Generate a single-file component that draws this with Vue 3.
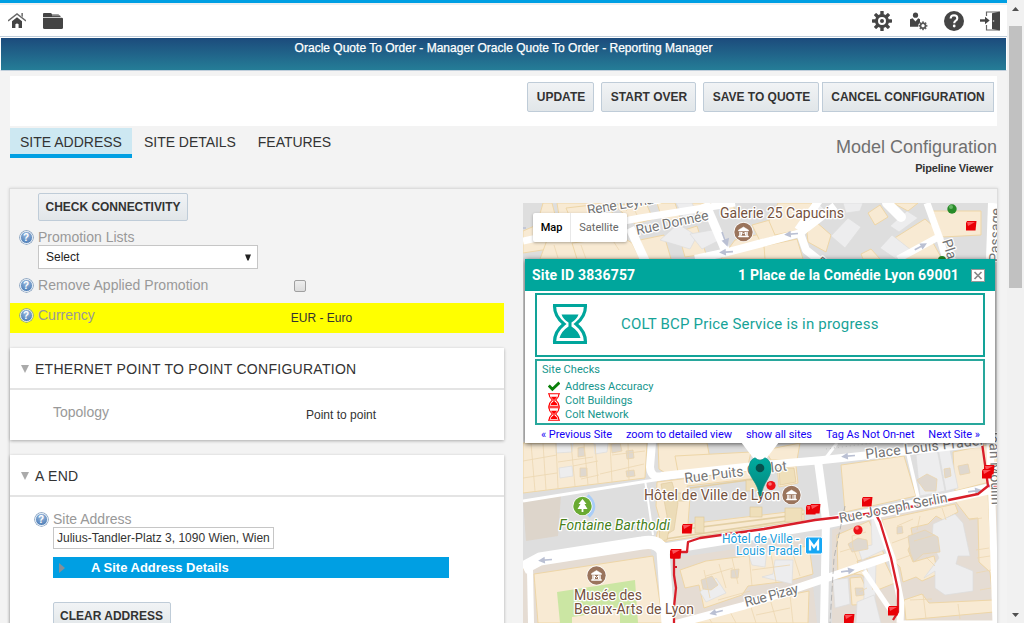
<script setup>
const actions = [
  { label: 'UPDATE', cls: 'w-update' },
  { label: 'START OVER', cls: 'w-start' },
  { label: 'SAVE TO QUOTE', cls: 'w-save' },
  { label: 'CANCEL CONFIGURATION', cls: 'w-cancel' },
]
const tabs = ['SITE ADDRESS', 'SITE DETAILS', 'FEATURES']
const links = ['« Previous Site', 'zoom to detailed view', 'show all sites', 'Tag As Not On-net', 'Next Site »']

const buildings = [
  // north blocks
  '543,203 552,203 558,226 549,236 536,228', '557,203 607,203 613,214 560,222', '566,208 592,205 602,214 584,222 571,220',
  '523,231 539,224 547,231 549,249 523,253', '547,240 566,236 567,230 580,241 585,250 620,240 625,259 540,259',
  '572,243 605,239 614,232 632,243 640,259 577,259', '614,205 646,203 653,219 635,224 624,214',
  '657,203 675,203 680,218 663,222', '640,240 664,235 671,259 645,259', '678,232 697,226 706,254 685,257',
  '689,203 710,203 714,218 699,221', '719,203 733,203 735,212 724,215', '735,240 760,234 768,259 721,259',
  '752,225 777,218 790,231 760,241', '764,246 797,239 803,259 765,259', '778,203 812,203 808,211 799,230 775,235 769,221',
  '815,221 831,235 826,252 808,242 807,233', '868,213 880,205 888,217 875,225', '861,254 871,249 880,259 863,259',
  '893,239 925,219 941,233 909,253', '904,259 932,241 942,259', '893,203 918,203 908,211',
  '933,211 981,211 981,235 942,237',
  // west of the city hall
  '523,443 647,443 645,478 523,493', '658,443 707,443 712,469 667,474 659,469', '675,456 751,452 748,465 678,472',
  '657,482 755,470 758,478 687,486 690,497 688,524 804,510 804,520 655,543 660,520 656,506',
  '777,465 796,466 798,483 779,487', '765,450 800,443 797,460 771,460',
  // museum
  '534,574 653,556 663,623 538,623',
  // east square
  '841,465 904,456 916,496 845,512', '953,452 997,443 997,480 955,491',
  '837,535 869,521 884,554 857,561 861,572 838,579',
  '854,574 884,560 895,583 875,591 862,575', '850,578 861,577 873,604 852,605',
  '882,520 955,504 958,512 943,520 936,516 928,524 911,528 913,539 908,550 913,562 934,556 938,574 922,581 916,577 903,582 900,567 892,559',
  '955,501 988,493 994,612 906,620 904,600 922,594 929,603 993,600 990,572 979,562 978,518 969,519',
  '680,570 706,561 746,556 764,552 809,546 813,574 789,581 748,586 742,595 704,608 699,585 685,588',
  '678,623 709,614 745,607 789,595 809,591 808,623',
]
const pale = [
  '584,217 603,207 615,218 620,230 605,236', '660,240 678,224 697,236 690,249', '676,203 692,203 697,214 684,218',
  '690,234 712,230 720,240 702,249', '810,213 820,222 829,214 820,205', '831,236 848,218 861,227 845,248',
  '843,203 863,203 860,211 846,213', '890,226 907,211 918,218 899,232', '880,248 892,235 911,250 896,259',
  '556,453 572,452 573,443 556,443', '559,468 572,466 573,476 560,478', '594,443 608,443 607,452 595,454',
  '916,455 937,449 945,491 920,496', '938,448 949,445 958,488 946,491',
  '871,518 879,519 890,547 862,560 858,548 872,545', '864,567 876,563 875,600 864,601',
  '933,524 955,514 963,523 970,556 958,556 956,564 973,571 973,591 945,595 935,588 935,571 924,578 939,558 932,543',
  '700,592 716,578 726,593 706,602', '746,547 767,549 765,567 752,565', '762,577 773,574 775,560 793,560 792,584',
  '833,580 848,578 850,604 835,608', '857,602 874,595 881,623 856,623',
]
const details = [
  'M531 443L535 491M543 443L546 490M556 443L558 488M571 443L575 486M584 443L588 485M595 444L598 483M610 443L612 482M628 443L629 480',
  'M523 461L557 455M558 462L593 457M600 474L644 464M612 455L645 451M523 478L557 473M573 466L598 461M581 479L599 475',
  'M598 203L602 214M626 211L632 205L639 219M524 240L548 235M554 245L558 258M581 245L586 259M610 236L619 250',
  'M704 570L710 598M719 564L726 588M732 558L738 584M749 554L752 586M770 548L776 582M791 548L800 576M706 576L733 568M752 570L790 565M718 600L750 591',
  'M691 619L706 613L712 623M729 610L736 623M750 604L756 623M770 599L777 623M790 595L793 623M711 615L728 611M756 615L790 608',
  'M897 526L913 519M920 516L917 530M942 508L946 520M914 541L935 535M926 557L935 566M897 560L911 555M892 543L908 537',
  'M969 520L982 518M976 550L989 548M977 558L990 556M976 573L991 570M980 590L991 588M910 600L932 599M958 604L960 619M923 594L926 619',
  'M840 552L853 548L858 561M853 548L852 536L866 532M865 563L873 590M859 592L867 588',
]
const yards = [
  '626,451 633,450 634,458 627,459', '578,448 584,447 585,456 578,457', '611,444 620,443 622,451 612,453',
  '580,468 587,468 587,476 580,477', '626,471 634,470 635,476 627,477', '523,563 532,563 532,569 523,569',
  '917,480 927,474 937,479 936,491 925,491', '944,469 950,468 951,476 945,478', '958,466 968,464 970,473 960,475',
  '855,588 863,588 864,595 856,596', '897,527 902,526 903,533 897,534',
  '908,536 925,530 938,537 940,552 923,554 914,562 910,552', '848,544 858,538 867,540 868,549 852,552',
  '701,580 712,576 718,585 711,590 703,589', '731,570 739,569 738,578 731,578',
]
const markers = [
  [966, 221], [682, 524], [862, 497], [888, 606], [844, 614], [670, 549], [671, 549], [806, 505], [810, 504], [984, 465], [982, 469],
]
const arrows = [
  [546, 560, 175], [849, 456, 175], [974, 491, -8], [847, 571, -9], [717, 612, 165], [920, 247, -28], [792, 234, 175], [727, 252, 176],
]
</script>

<template>
  <div class="page">
    <div class="content">
      <header class="topbar">
        <div class="icons-left">
          <svg class="home" width="18" height="18" viewBox="0 0 18 18">
            <path d="M0 9L9 2L18 9" fill="none" stroke="#6a6a6a" stroke-width="1.5" />
            <path d="M13.4 1h1.5v4l-1.5-1z" fill="#6a6a6a" />
            <path d="M4 9.2L9 5.3L14 9.2V16H10.6V12.2Q9 10.8 7.4 12.2V16H4z" fill="#444" />
          </svg>
          <svg class="folder" width="20" height="18" viewBox="0 0 20 18">
            <path d="M0 4V2Q0 1 1 1H7.5Q9 1 9 2.5H15.5L17.5 4V5H0z" fill="#444" />
            <path d="M0 5.8H18.8Q20 5.8 20 7V15.5Q20 17 18.5 17H1.5Q0 17 0 15.5z" fill="#444" />
            <path d="M9 3.7H17" stroke="#aaa" stroke-width=".8" />
          </svg>
        </div>
        <div class="icons-right">
          <svg width="20" height="20" viewBox="0 0 20 20">
            <g fill="#454545"><rect v-for="i in 8" :key="i" x="8.3" y="0" width="3.4" height="5" rx=".6" :transform="`rotate(${i * 45} 10 10)`" /></g>
            <circle cx="10" cy="10" r="5.5" fill="none" stroke="#454545" stroke-width="3" /><circle cx="10" cy="10" r="2" fill="#454545" />
          </svg>
          <svg width="20" height="20" viewBox="-1 0 20 20">
            <circle cx="6.5" cy="4.2" r="2.6" fill="#454545" /><path d="M1 8.2L3.6 7.2L6.5 10.5L9.2 7.2L11 8.2V11.5Q9 13 9 15.7H1z" fill="#454545" />
            <g fill="#666"><rect v-for="i in 8" :key="i" x="13.1" y="10.4" width="1.8" height="2.5" :transform="`rotate(${i * 45} 14 14.8)`" /></g>
            <circle cx="14" cy="14.8" r="2.5" fill="none" stroke="#555" stroke-width="1.5" />
          </svg>
          <svg width="20" height="20" viewBox="0 0 20 20">
            <circle cx="10" cy="10" r="10" fill="#454545" /><path d="M6.6 7.5Q6.8 4.2 10 4.2Q13.3 4.3 13.3 7.2Q13.3 8.7 11.5 9.8Q10.2 10.6 10.2 12.3" fill="none" stroke="#fff" stroke-width="2.1" /><circle cx="10.2" cy="15" r="1.4" fill="#fff" />
          </svg>
          <svg width="20" height="20" viewBox="0 0 20 20">
            <path d="M6.5 5V1H19V19H6.5V14" fill="none" stroke="#666" stroke-width="1.2" /><path d="M12 2.2L20 .5V19.5L12 18z" fill="#454545" />
            <path d="M0 9.5H6" stroke="#454545" stroke-width="2.4" /><path d="M5 5.8L9.7 9.5L5 13.2z" fill="#454545" /><circle cx="13.5" cy="10" r=".8" fill="#ddd" />
          </svg>
        </div>
      </header>
      <div class="banner"><span>Oracle Quote To Order - Manager Oracle Quote To Order - Reporting Manager</span></div>

      <div class="actions">
        <button v-for="a in actions" :key="a.label" class="btn" :class="a.cls">{{ a.label }}</button>
      </div>

      <div class="subhead">
        <nav class="tabs">
          <span v-for="(t, i) in tabs" :key="t" class="tab" :class="{ active: i === 0 }">{{ t }}</span>
        </nav>
        <div class="model">
          <div class="model-title">Model Configuration</div>
          <div class="model-sub">Pipeline Viewer</div>
        </div>
      </div>

      <main class="panel">
        <section class="form">
          <button class="btn check">CHECK CONNECTIVITY</button>
          <div class="row promo"><i class="help">?</i><label>Promotion Lists</label></div>
          <div class="select"><span>Select</span><svg width="6" height="7" viewBox="0 0 6 7"><path d="M0 .5H6L3.6 6.5H2.4z" fill="#222" /></svg></div>
          <div class="row remove"><i class="help">?</i><label>Remove Applied Promotion</label><span class="checkbox"></span></div>
          <div class="row currency"><i class="help">?</i><label>Currency</label><span class="val">EUR - Euro</span></div>

          <div class="card eth">
            <div class="card-head"><i class="tri"></i>ETHERNET POINT TO POINT CONFIGURATION</div>
            <div class="topology"><label>Topology</label><span>Point to point</span></div>
          </div>

          <div class="card aend">
            <div class="card-head"><i class="tri"></i>A END</div>
            <div class="row site"><i class="help">?</i><label>Site Address</label></div>
            <div class="input">Julius-Tandler-Platz 3, 1090 Wien, Wien</div>
            <div class="bluebar"><i class="rtri"></i>A Site Address Details</div>
            <button class="btn clear">CLEAR ADDRESS</button>
          </div>
        </section>

        <section class="map">
          <svg class="canvas" width="474" height="420" viewBox="523 203 474 420">
            <rect x="523" y="203" width="474" height="420" fill="#dedede" />
            <path d="M523 502L561 495L558 536L526 541z" fill="#ddd5cb" />
            <path d="M523 568L650 548L668 623H523zM675 558L808 538L817 623H675zM832 530L870 515L900 600L906 623H832zM880 513L997 490V623H905z" fill="#e5dcd3" />
            <g fill="#f8ead3" stroke="#eed6a7" stroke-width="1"><polygon v-for="(p, i) in buildings" :key="i" :points="p" /></g>
            <g fill="#ededee" stroke="#dcdcdd" stroke-width=".7"><polygon v-for="(p, i) in pale" :key="i" :points="p" /></g>
            <g fill="#dfd8cf" stroke="#ead4ad" stroke-width=".8"><polygon v-for="(p, i) in yards" :key="i" :points="p" /></g>
            <path v-for="(d, i) in details" :key="'d' + i" :d="d" fill="none" stroke="#ecd7b1" stroke-width=".8" />
            <path d="M557 592L635 580L638 623H560z" fill="#cbe6a3" />
            <path d="M572 617L620 610V623H572z" fill="#f8ead3" />
            <!-- carved roof of the city hall -->
            <path d="M661 484L672 482L678 503L674 530L661 538L667 516z" fill="#ecdcb8" stroke="#dfc99c" stroke-width=".6" />
            <path d="M658 540L800 519M686 529L804 514M690 488L756 479" fill="none" stroke="#e3cfa4" stroke-width="1.6" />
            <g fill="#efdfba" stroke="#dbc596" stroke-width=".6">
              <rect x="746" y="480" width="17" height="11" /><rect x="750" y="507" width="12" height="10" /><rect x="676" y="493" width="11" height="8" />
              <rect x="695" y="517" width="9" height="16" /><rect x="785" y="508" width="17" height="14" /><path d="M779 468H794L796 482L780 485z" /><path d="M659 531L669 530L667 540L660 541z" />
            </g>

            <g fill="none" stroke="#fff" stroke-linejoin="round">
              <path d="M523 241L560 233L640 218L735 203" stroke-width="7" />
              <path d="M630 228L647 265" stroke-width="9" />
              <path d="M705 203L727 254" stroke-width="9" /><path d="M695 259L728 252L800 233L835 206" stroke-width="8" />
              <path d="M800 233L806 250L820 261" stroke-width="8" /><path d="M798 230L820 199" stroke-width="8" />
              <path d="M887 203L901 217" stroke-width="10" stroke-linecap="round" />
              <path d="M927 203L940 239L947 263M898 259L942 235" stroke-width="7" /><path d="M993 203L991 259" stroke-width="10" />
              <path d="M523 501L648 481L700 473" stroke-width="3" /><path d="M645 480L653 535" stroke-width="2" />
              <path d="M652 443L650 467Q651 479 662 476L764 465L823 460L983 443" stroke-width="8" />
              <path d="M818 461L826 520L824 623" stroke-width="8" /><path d="M908 454L918 497" stroke-width="3.5" /><path d="M825 459L837 443" stroke-width="3" />
              <path d="M523 568L540 559L642 543Q658 540 663 551L668 623" stroke-width="13" /><path d="M530 570L531 623" stroke-width="6" />
              <path d="M664 549L764 533L825 523L944 499L997 487" stroke-width="11" />
              <path d="M668 626L743 606L824 579L888 557" stroke-width="8" /><path d="M864 571L891 611" stroke-width="5" />
              <path d="M876 515L892 558L901 603L900 623" stroke-width="7" /><path d="M990 443L996 623" stroke-width="7" />
              <path d="M902 622H997" stroke-width="3" />
            </g>
            <path d="M845 506L834 558L830 623" fill="none" stroke="#aaa" stroke-width=".8" stroke-dasharray="6 3" />
            <path d="M826 449L897 440" stroke="#c5c5c5" stroke-width="1" stroke-dasharray="1 3" />
            <g stroke="#bac0d3" stroke-width="1.7" fill="#bac0d3">
              <path v-for="(a, i) in arrows" :key="i" d="M-6 0H5M2 -2L6 0L2 2z" :transform="`translate(${a[0]} ${a[1]}) rotate(${a[2]})`" />
              <path d="M722 232L726 243M723 241L727 245L728 239zM523 228H526" />
            </g>

            <g fill="none" stroke="#d81e29" stroke-width="2.3" stroke-linejoin="round">
              <path d="M674 623V607L676 588L674 575L674 552L687 552L688 542L700 538L764 529L815 520L875 513L944 501L978 494L988 486H997M988 486L982 443M875 513L880 522L891 558L898 590L898 612L893 620" />
            </g>

            <g class="road-text">
              <text transform="translate(588 215) rotate(-10)" textLength="82">René Leynaud</text>
              <text transform="translate(637 235) rotate(-12)" textLength="74">Rue Donnée</text>
              <text transform="translate(942 241) rotate(72)">Place</text>
              <text transform="translate(999 262) rotate(-88)">Passage</text>
              <text transform="translate(685 483) rotate(-7)" textLength="103">Rue Puits Gaillot</text>
              <text transform="translate(866 459) rotate(-7)" textLength="118">Place Louis Pradel</text>
              <text transform="translate(840 523) rotate(-11)" textLength="110">Rue Joseph Serlin</text>
              <text transform="translate(746 607) rotate(-15)" textLength="55">Rue Pizay</text>
              <text transform="translate(989 428) rotate(88)" textLength="77">Jean Moulin</text>
              <text transform="translate(815 263) rotate(42)">R</text>
            </g>

            <g class="poi">
              <text x="720" y="218" textLength="124">Galerie 25 Capucins</text>
              <text x="644" y="500" textLength="136">Hôtel de Ville de Lyon</text>
              <text x="574" y="600" textLength="68">Musée des</text>
              <text x="574" y="614" textLength="120">Beaux-Arts de Lyon</text>
            </g>
            <text class="fountain" x="559" y="530" textLength="111">Fontaine Bartholdi</text>
            <g class="metro"><text x="722" y="543" textLength="77">Hôtel de Ville -</text><text x="736" y="555" textLength="66">Louis Pradel</text></g>

            <g v-for="p in [[743.5, 232], [596.5, 575.5], [791.5, 495]]" :key="p[0]" :transform="`translate(${p[0]} ${p[1]})`">
              <circle r="10" fill="#fff" /><circle r="9.2" fill="#9a745c" />
              <path d="M-5 -2L0 -5L5 -2V-1H-5zM-5 4H5V5H-5zM-4 0H-3V4H-4zM3 0H4V4H3z" fill="#fff" stroke="#fff" stroke-width=".5" />
              <path v-if="p[0] < 780" d="M-2 3.5V0L0 2L2 0V3.5" fill="none" stroke="#fff" stroke-width="1" />
              <path v-else d="M-1.5 0V4M1.5 0V4" stroke="#fff" />
            </g>
            <path d="M587 496Q598 506 588 516" fill="none" stroke="#a9cdf7" stroke-width="5" />
            <circle cx="582.5" cy="506" r="10" fill="#fff" /><circle cx="582.5" cy="506" r="9.2" fill="#69aa32" />
            <path d="M582.5 499L578.5 504H580.5L577.5 509H581.6V512H583.4V509H587.5L584.5 504H586.5z" fill="#fff" />
            <rect x="805.5" y="537" width="17" height="17" rx="2" fill="#16a7f4" stroke="#fff" /><path d="M810 550.5V541.5L814 547L818 541.5V550.5" fill="none" stroke="#fff" stroke-width="2.3" />

            <g v-for="(m, i) in markers" :key="'m' + i" :transform="`translate(${m[0]} ${m[1]})`">
              <path d="M1 0H10.5L9.5 9.5H0V2z" fill="#e90006" /><path d="M1 1H9L2 5z" fill="#fb5359" />
            </g>
            <g fill="#ee1118"><circle cx="858" cy="530" r="4.6" /><circle cx="771" cy="485.5" r="4.6" /></g>
            <g fill="#fb7377"><circle cx="857" cy="528" r="1.8" /><circle cx="770" cy="484" r="1.8" /></g>
            <circle cx="952" cy="209" r="4.7" fill="#288b28" /><circle cx="951" cy="207" r="2" fill="#65b765" />
            <circle cx="942" cy="260" r="4" fill="#268a26" />
            <path d="M675 566h2v2h-2z" fill="#cf1d28" />
          </svg>

          <div class="maptype"><b>Map</b><span>Satellite</span></div>

          <div class="info">
            <div class="info-head"><span class="sid">Site ID 3836757</span><span class="addr">1 Place de la Comédie Lyon 69001</span>
              <svg class="close" width="14" height="13" viewBox="0 0 14 13"><rect x=".5" y=".5" width="13" height="12" fill="#fff" stroke="#999" /><path d="M3.5 3L10.5 10M10.5 3L3.5 10" stroke="#888" stroke-width="1.7" /></svg>
            </div>
            <div class="status">
              <svg class="glass" width="36" height="40" viewBox="0 0 36 40">
                <path d="M1 1.5H35M1 38.5H35M2.5 2C2.5 11 7 16 12 20C7 24 2.5 29 2.5 38M33.5 2C33.5 11 29 16 24 20C29 24 33.5 29 33.5 38" fill="none" stroke="#00a69c" stroke-width="3.2" />
                <path d="M9.5 10.5H26.5Q25 15 19.5 18.5V22.5Q26.5 27 28.5 34H7.5Q9.5 27 16.5 22.5V18.5Q11 15 9.5 10.5z" fill="#00a69c" />
              </svg>
              <span>COLT BCP Price Service is in progress</span>
            </div>
            <div class="checks">
              <div class="checks-title">Site Checks</div>
              <div class="check-row"><svg width="12" height="14" viewBox="0 0 12 14"><path d="M.8 6.5L4.4 10.3L11.4 3.6" fill="none" stroke="#0a800a" stroke-width="2.8" /></svg>Address Accuracy</div>
              <div v-for="n in ['Colt Buildings', 'Colt Network']" :key="n" class="check-row">
                <svg width="12" height="14" viewBox="0 0 12 14"><path d="M0 .7H12M0 13.3H12M1 1C1 4 3 5.7 4.4 7C3 8.3 1 10 1 13M11 1C11 4 9 5.7 7.6 7C9 8.3 11 10 11 13" fill="none" stroke="#f00" stroke-width="1.1" /><path d="M3 3.7H9Q8.5 5.4 6.6 6.4V8.5Q9 9.5 9.5 12H2.5Q3 9.5 5.4 8.5V6.4Q3.5 5.4 3 3.7z" fill="#f00" /></svg>{{ n }}
              </div>
            </div>
            <div class="links"><a v-for="l in links" :key="l">{{ l }}</a></div>
          </div>

          <svg class="pin" width="38" height="54" viewBox="741 442 38 54">
            <defs><linearGradient id="pinFill" x1="0" y1="0" x2="0" y2="1"><stop offset="0" stop-color="#00ab9f" /><stop offset="1" stop-color="#04857c" /></linearGradient></defs>
            <path d="M741 442H779L766 459H754z" fill="#fff" />
            <path d="M749 469Q749 460 755 457.8Q758 460.3 760 460.3T765 457.8Q771 460 771 469C771 478 763 482 761 496H759.5C758 482 749 478 749 469z" fill="url(#pinFill)" stroke="#078f86" stroke-width=".7" />
            <circle cx="760" cy="468" r="4.3" fill="#06504d" />
          </svg>
        </section>
      </main>
    </div>

    <aside class="scroll">
      <svg width="7" height="4" viewBox="0 0 7 4"><path d="M3.5 0L7 4H0z" fill="#505050" /></svg>
      <div class="thumb"></div>
      <svg class="down" width="7" height="4" viewBox="0 0 7 4"><path d="M0 0H7L3.5 4z" fill="#505050" /></svg>
    </aside>
  </div>
</template>

<style>
body { overflow: hidden; }
</style>

<style scoped>
* { box-sizing: border-box; }
.page { width: 1024px; height: 623px; overflow: hidden; display: flex; background: #f3f3f3; font-family: "Liberation Sans", Arial, sans-serif; font-size: 12px; color: #333; white-space: nowrap; }
.content { width: 1007px; height: 623px; overflow: hidden; flex: none; }
.topbar { height: 37px; border-top: 3px solid #009fe3; border-bottom: 1px solid #c0cedb; background: linear-gradient(#f0f0f0 0 2px, #fff 2px); display: flex; justify-content: space-between; padding: 8px 7px 0 8px; }
.icons-left { display: flex; gap: 17px; padding-top: 1px; }
.icons-right { display: flex; gap: 16px; }
.banner { height: 34px; border: 1px solid #fff; border-bottom: 1px solid #c0cedb; background: linear-gradient(#1c4b7c, #257d97); color: #fff; text-align: center; line-height: 14px; padding-top: 3px; }
.banner span { -webkit-text-stroke: .25px #fff; letter-spacing: .01px; }
.actions { margin: 5px 10px 0; height: 50px; background: #fff; display: flex; justify-content: flex-end; padding: 6px 3px 0; }
.btn { box-sizing: border-box; height: 30px; border: 1px solid #bfccd8; border-radius: 2px; background: linear-gradient(#f1f3f5, #e1e6e9); color: #333; font: bold 12px "Liberation Sans", Arial, sans-serif; padding: 0; text-align: center; display: block; white-space: nowrap; }
.w-update { width: 67px; margin-right: 7px; padding-left: 1px; }
.w-start { width: 95px; margin-right: 7px; padding-left: 1px; }
.w-save { width: 116px; margin-right: 3px; padding-left: 1px; }
.w-cancel { width: 172px; border-radius: 0; }
.subhead { margin: 2px 10px 0; height: 60px; display: flex; justify-content: space-between; }
.tabs { display: flex; height: 30px; }
.tab { font-size: 14px; line-height: 29px; padding: 0 10px; }
.tab + .tab { padding: 0 10px 0 12px; letter-spacing: -.04px; }
.tab.active { background: #cde8f2; border-bottom: 4px solid #009fe3; line-height: 28px; width: 122px; }
.model { text-align: right; }
.model-title { font-size: 18px; line-height: 22px; margin-top: 8px; color: #707070; }
.model-sub { font-size: 11px; font-weight: bold; line-height: 14px; margin: 3px 4px 0 0; letter-spacing: -.18px; }
.panel { margin: 0 9px; height: 500px; border: 1px solid #ddd; box-shadow: 0 0 3px rgba(0, 0, 0, .13); display: flex; }
.form { width: 494px; flex: none; }
.check { margin: 4px 0 0 28px; width: 150px; height: 28px; padding-bottom: 1px; letter-spacing: -.02px; }
.row { display: flex; align-items: center; padding-left: 9.5px; height: 16px; font-size: 14px; color: #999; }
.row label { margin-left: 5.5px; }
.help { width: 13px; height: 13px; border-radius: 50%; flex: none; background: radial-gradient(circle at 50% 25%, #9dbadd, #3f73b0); border: 1px solid #dce7f3; box-shadow: 0 0 0 .7px #7795b7; color: #fff; font: bold 10px/11px "Liberation Sans", Arial, sans-serif; text-align: center; }
.promo { margin-top: 8px; }
.select { margin: 0 0 0 28px; width: 220px; height: 24px; border: 1px solid #c6c6c6; background: #fff; display: flex; align-items: center; justify-content: space-between; padding: 0 6px 0 7px; color: #222; }
.remove { margin-top: 8px; }
.remove label { letter-spacing: .03px; }
.checkbox { width: 12px; height: 12px; border: 1px solid #a0a0a0; border-radius: 2px; background: linear-gradient(#eee, #dcdcdc); margin: 2px 0 0 86px; }
.currency { margin-top: 10px; background: #ff0; height: 30px; padding-bottom: 6px; }
.val { color: #333; font-size: 12px; margin: 5px 0 0 196px; }
.card { background: #fff; box-shadow: 0 1px 3px rgba(0, 0, 0, .3); }
.eth { margin-top: 15px; height: 92px; }
.aend { margin-top: 15px; height: 200px; }
.card-head { height: 42px; border-bottom: 2px solid #e4e4e4; display: flex; align-items: center; font-size: 14px; letter-spacing: .28px; padding: 2px 0 0 11px; }
.tri { border: 4.5px solid transparent; border-top: 8px solid #aaa; border-bottom: 0; margin-right: 6px; }
.topology { display: flex; padding: 14px 0 0 43px; line-height: 16px; font-size: 14px; color: #999; }
.topology label { width: 253px; }
.topology span { font-size: 12px; color: #333; margin-top: 3px; }
.site { padding-left: 24.5px; margin-top: 14px; }
.input { margin: 0 0 0 43px; width: 221px; height: 22px; border: 1px solid #c6c6c6; background: #fff; line-height: 20px; padding-left: 3px; }
.bluebar { margin: 8px 0 0 43px; width: 396px; height: 21px; background: #009fe3; color: #fff; font-weight: bold; font-size: 13px; display: flex; align-items: center; padding-left: 6px; }
.rtri { border: 5px solid transparent; border-left: 6px solid #858f98; border-right: 0; margin-right: 26px; }
.clear { margin: 24px 0 0 43px; width: 118px; height: 28px; padding-right: 1px; }
.map { position: relative; width: 474px; height: 420px; margin: 14px 0 0 19px; overflow: hidden; flex: none; font-family: Roboto, sans-serif; }
.canvas { display: block; }
.canvas text { font-family: Roboto, sans-serif; font-size: 14px; paint-order: stroke; stroke: #fff; stroke-width: 2.5px; stroke-linejoin: round; }
.road-text text { fill: #747474; }
.canvas .poi text { fill: #75523e; }
.canvas .fountain { fill: #467f1b; font-style: italic; }
.canvas .metro text { fill: #209ddc; font-size: 12px; }
.maptype { position: absolute; left: 10px; top: 10px; height: 29px; width: 94px; background: #fff; box-shadow: 0 1px 3px rgba(0, 0, 0, .3); display: flex; line-height: 29px; font-size: 11px; color: #666; border-radius: 2px; }
.maptype b { color: #000; font-weight: 500; width: 38px; text-align: center; border-right: 1px solid #e8e8e8; }
.maptype span { width: 56px; text-align: center; }
.info { position: absolute; left: 2px; top: 56px; width: 470px; height: 184px; background: #fff; box-shadow: 0 1px 5px rgba(0, 0, 0, .65); }
.info-head { height: 32px; background: #00a69c; color: #fff; font-weight: bold; font-size: 14px; display: flex; align-items: center; padding: 0 10px 0 7px; }
.sid, .addr { letter-spacing: .15px; }
.addr { margin-left: auto; margin-right: 12px; }
.close { flex: none; margin-top: 1px; }
.status { margin: 2px 10px 0; height: 64px; border: 2px solid #12a398; display: flex; align-items: center; padding-left: 15px; color: #16a398; font-size: 15px; letter-spacing: .19px; }
.glass { margin-bottom: 2px; }
.status span { margin-left: 33px; padding-bottom: 2px; }
.checks { margin: 2px 10px 0; height: 66px; border: 2px solid #28a79c; color: #16968d; font-size: 11px; padding: 2px 0 0 5px; }
.checks-title { line-height: 14px; height: 16px; letter-spacing: .05px; }
.check-row { display: flex; align-items: center; height: 14px; padding-left: 6px; gap: 5px; }
.check-row svg { flex: none; }
.links { display: flex; justify-content: space-between; padding: 0 15px 0 16px; line-height: 20px; font-size: 11px; letter-spacing: -.03px; color: #1400f4; }
.pin { position: absolute; left: 218px; top: 239px; }
.scroll { width: 17px; background: #f1f1f1; display: flex; flex-direction: column; align-items: center; padding: 7px 0 6px; height: 623px; }
.thumb { width: 13px; height: 262px; margin-top: 15px; background: #c1c1c1; }
.down { margin-top: auto; }
</style>
